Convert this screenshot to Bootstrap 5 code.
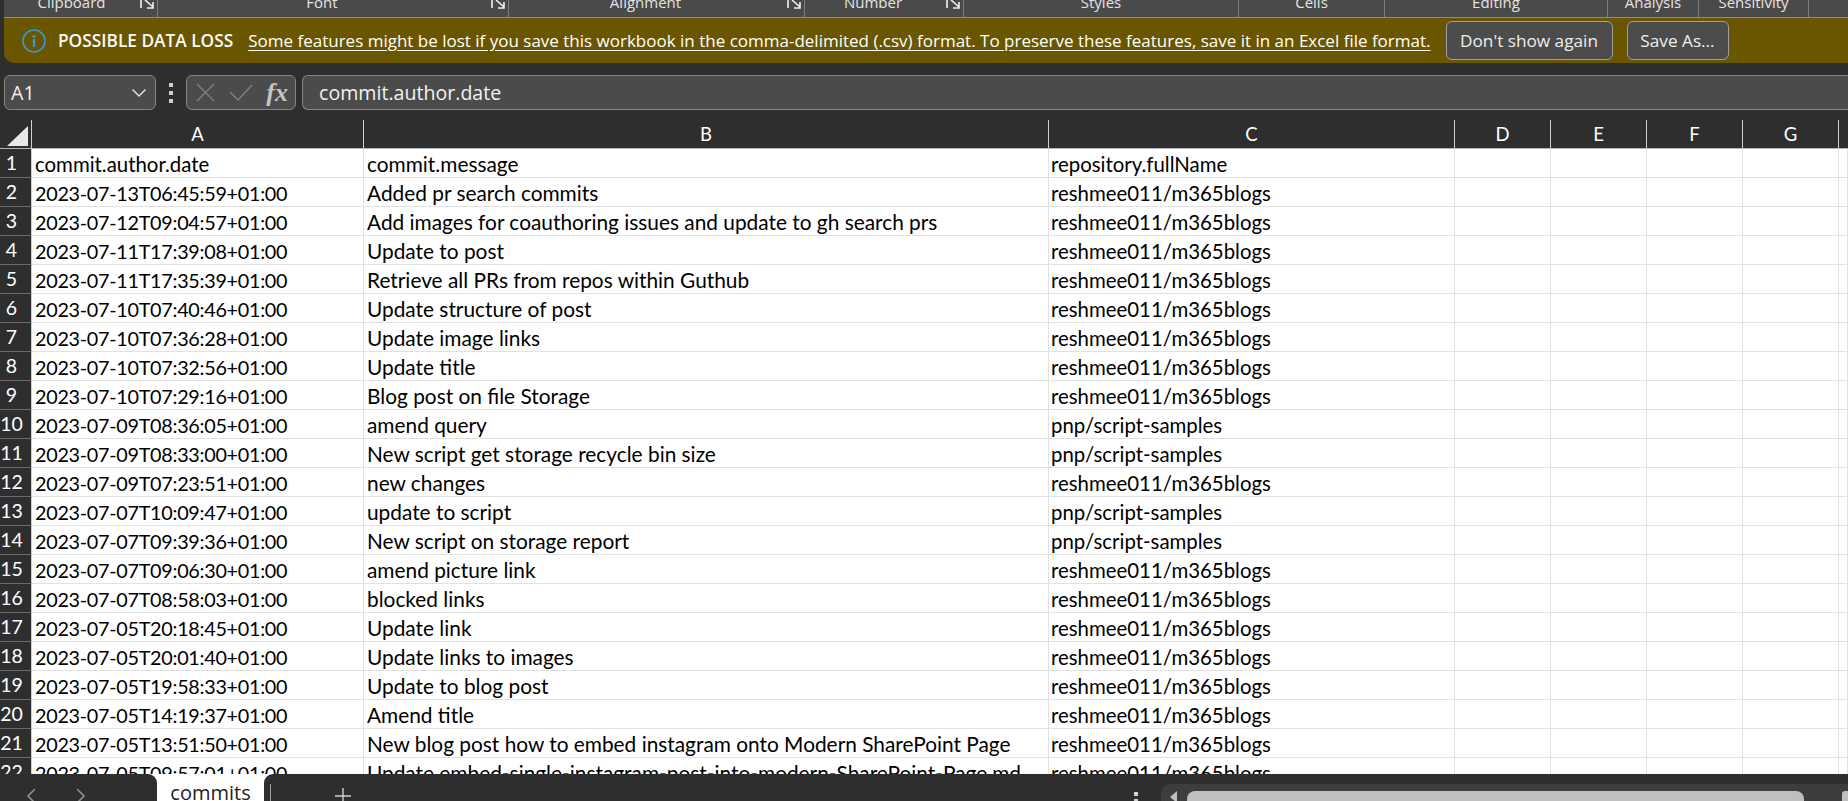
<!DOCTYPE html>
<html lang="en"><head><meta charset="utf-8"><title>commits</title>
<link rel="stylesheet" href="https://cdn.jsdelivr.net/npm/bootstrap@5.3.0/dist/css/bootstrap.min.css">
<style>
html,body{height:100%;}
body{background:#2e2e2e;font-family:"Open Sans","Noto Sans",sans-serif;color:#fff;overflow:hidden;}
.shell{height:801px;}
.ribbon{height:18px;margin-left:4px;background:#4a4a4a;border-bottom:1px solid #8c8c8c;overflow:hidden;display:grid;grid-template-columns:154px 351px 296px 159px 275px 146px 223px 91px 110px 1fr;}
.rgroup{height:17px;border-right:1px solid #7d7d7d;display:flex;color:#e4e4e4;font-size:15px;line-height:17px;}
.rgroup:first-child span{padding-left:4px;}
.rgroup:last-child{border-right:0;}
.rgroup span{flex:1;text-align:center;margin-top:-6px;white-space:nowrap;}
.rgroup svg{flex:none;width:22px;height:17px;}
.banner{height:45px;margin-left:4px;background:#6b5600;border-bottom-left-radius:10px;padding-left:18px;font-size:17px;white-space:nowrap;}
.banner b{font-weight:600;font-size:17.3px;margin-left:12px;margin-right:15px;color:#fafafa;}
.banner a{color:#fff;text-decoration:underline;text-underline-offset:3px;}
.bbtn{height:39px;padding:0;background:#4c4c4c;border:1px solid #a0a0a0;border-radius:6px;color:#eee;font-size:17.2px;line-height:36px;white-space:nowrap;}
.bbtn:hover{background:#4c4c4c;color:#eee;border-color:#a0a0a0;}
.bfirst{margin-left:15px;width:167px;}
.bsecond{margin-left:14px;width:102px;}
.fbar{height:35px;margin-top:12px;padding-left:4px;}
.fieldbox{height:35px;background:#4b4b4b;border:1px solid #868686;border-radius:6px;color:#f2f2f2;font-size:19.6px;}
.namebox{width:152px;padding:0 8px 0 6px;}
.dots{width:30px;}
.dots i{display:block;width:4px;height:4px;margin:2px auto;background:#d0d0d0;}
.fxbox{width:110px;padding:0 7px 0 9px;}
.fxlabel{font-family:"Liberation Serif",serif;font-style:italic;font-weight:700;font-size:26px;color:#c4c4c4;line-height:30px;}
.formula{flex:1;margin-left:6px;padding-left:16px;border-right:0;border-radius:6px 0 0 6px;margin-right:-4px;}
.sheet{flex:1 1 0;min-height:0;margin-top:10px;overflow:hidden;}
.grid-t{table-layout:fixed;width:1848px;border-collapse:separate;border-spacing:0;font-family:Lato,"Liberation Sans",sans-serif;font-size:20.4px;color:#000;}
.grid-t th,.grid-t td{padding:0;white-space:nowrap;overflow:hidden;}
.grid-t thead th{height:29px;background:#2e2e2e;color:#fff;font-weight:400;text-align:center;border-right:1px solid #cfcfcf;border-bottom:1px solid #b4b4b4;line-height:28px;font-size:18.5px;}
.grid-t thead th:last-child{border-right:0;}
.grid-t tbody th{height:29px;background:#2e2e2e;color:#fff;font-weight:400;text-align:center;border-bottom:1px solid #6a6a6a;border-right:1px solid #cfcfcf;line-height:28px;font-size:19.5px;padding-right:8px;}
.grid-t tbody td{height:29px;background:#fff;border-right:1px solid #e1e1e1;border-bottom:1px solid #e1e1e1;padding:2px 0 0 3px;line-height:26px;}
.grid-t td.stamp{font-size:19.8px;letter-spacing:-.28px;}
.grid-t td.msg{font-size:20.85px;}
.grid-t td.repo{padding-left:2px;}
.corner{display:block;margin:4px 0 0 7px;}
.tabbar{height:27px;background:#fff;overflow:hidden;}
.tabnav{width:157px;background:#2e2e2e;border-top-right-radius:9px;padding-left:26px;gap:40px;}
.tabnav svg{margin-top:14px;}
.tabnow{width:107px;color:#222;font-family:"Open Sans",sans-serif;font-weight:500;font-size:20px;text-align:center;line-height:38px;}
.tabrest{flex:1;background:#2e2e2e;border-top-left-radius:9px;}
.tabsep{width:1px;height:17px;margin:10px 0 0 6px;background:#9a9a9a;}
.tabplus{margin:14px 777px 0 64px;}
.sdots{margin:18px 0 0 6px;width:4px;}
.sdots i{display:block;width:4px;height:4px;background:#d0d0d0;margin-bottom:3px;}
.track{height:17px;margin:10px 0 0 23px;flex:1;background:#3d3d3d;border-top-left-radius:9px;padding:7px 0 0 8px;}
.thumb{width:617px;height:20px;background:#bfbfbf;border-radius:8px;margin-left:10px;}
.thumb2{width:6px;height:20px;background:#bfbfbf;border-radius:3px 0 0 0;margin-left:38px;}
</style></head>
<body>
<div class="shell d-flex flex-column">
  <div class="ribbon">
    <div class="rgroup"><span>Clipboard</span><svg viewBox="0 0 22 17"><path d="M6 0v8M10 0l8 7M18 2v6h-6" fill="none" stroke="#f0f0f0" stroke-width="1.6"/></svg></div>
    <div class="rgroup"><span>Font</span><svg viewBox="0 0 22 17"><path d="M6 0v8M10 0l8 7M18 2v6h-6" fill="none" stroke="#f0f0f0" stroke-width="1.6"/></svg></div>
    <div class="rgroup"><span>Alignment</span><svg viewBox="0 0 22 17"><path d="M6 0v8M10 0l8 7M18 2v6h-6" fill="none" stroke="#f0f0f0" stroke-width="1.6"/></svg></div>
    <div class="rgroup"><span>Number</span><svg viewBox="0 0 22 17"><path d="M6 0v8M10 0l8 7M18 2v6h-6" fill="none" stroke="#f0f0f0" stroke-width="1.6"/></svg></div>
    <div class="rgroup"><span>Styles</span></div>
    <div class="rgroup"><span>Cells</span></div>
    <div class="rgroup"><span>Editing</span></div>
    <div class="rgroup"><span>Analysis</span></div>
    <div class="rgroup"><span>Sensitivity</span></div>
    <div class="rgroup"></div>
  </div>
  <div class="banner d-flex align-items-center">
    <svg width="24" height="24" viewBox="0 0 24 24" class="flex-shrink-0"><circle cx="12" cy="12" r="11" fill="none" stroke="#3e97cf" stroke-width="1.6"/><circle cx="12" cy="7.2" r="1.5" fill="#3e97cf"/><rect x="10.8" y="10" width="2.4" height="8" fill="#3e97cf"/></svg>
    <b>POSSIBLE DATA LOSS</b>
    <a href="#">Some features might be lost if you save this workbook in the comma-delimited (.csv) format. To preserve these features, save it in an Excel file format.</a>
    <button type="button" class="btn bbtn bfirst">Don't show again</button>
    <button type="button" class="btn bbtn bsecond">Save As...</button>
  </div>
  <div class="fbar d-flex">
    <div class="fieldbox namebox d-flex align-items-center justify-content-between"><span>A1</span><svg width="16" height="10" viewBox="0 0 16 10"><path d="M1.5 1.5L8 8l6.5-6.5" fill="none" stroke="#e0e0e0" stroke-width="1.5"/></svg></div>
    <div class="dots d-flex flex-column justify-content-center"><i></i><i></i><i></i></div>
    <div class="fieldbox fxbox d-flex align-items-center justify-content-between">
      <svg width="19" height="19" viewBox="0 0 19 19"><path d="M1 1l17 17M18 1L1 18" fill="none" stroke="#7f7f7f" stroke-width="1.4"/></svg>
      <svg width="24" height="17" viewBox="0 0 24 17"><path d="M1 8l8 8L23 1" fill="none" stroke="#7f7f7f" stroke-width="1.4"/></svg>
      <span class="fxlabel">fx</span>
    </div>
    <div class="fieldbox formula d-flex align-items-center">commit.author.date</div>
  </div>
  <div class="sheet">
    <table class="grid-t">
      <colgroup><col style="width:32px"><col style="width:332px"><col style="width:685px"><col style="width:406px"><col style="width:96px"><col style="width:96px"><col style="width:96px"><col style="width:96px"><col></colgroup>
      <thead><tr><th><svg class="corner" width="21" height="20" viewBox="0 0 21 20"><path d="M21 0v20H0z" fill="#e8e8e8"/></svg></th><th>A</th><th>B</th><th>C</th><th>D</th><th>E</th><th>F</th><th>G</th><th></th></tr></thead>
      <tbody id="rows"></tbody>
    </table>
  </div>
  <div class="tabbar d-flex">
    <div class="tabnav d-flex align-items-start">
      <svg width="10" height="16" viewBox="0 0 10 16"><path d="M9 1L2 8l7 7" fill="none" stroke="#8f8f8f" stroke-width="1.6"/></svg>
      <svg width="10" height="16" viewBox="0 0 10 16"><path d="M1 1l7 7-7 7" fill="none" stroke="#8f8f8f" stroke-width="1.6"/></svg>
    </div>
    <div class="tabnow">commits</div>
    <div class="tabrest d-flex align-items-start">
      <div class="tabsep"></div>
      <svg class="tabplus" width="16" height="16" viewBox="0 0 16 16"><path d="M8 0v16M0 8h16" stroke="#cfcfcf" stroke-width="1.4"/></svg>
      <div class="sdots"><i></i><i></i></div>
      <div class="track d-flex align-items-start">
        <svg width="8" height="12" viewBox="0 0 8 12"><path d="M8 0v12L1 6z" fill="#bfbfbf"/></svg>
        <div class="thumb"></div>
        <div class="thumb2"></div>
      </div>
    </div>
  </div>
</div>
<script>
var R='reshmee011/m365blogs',P='pnp/script-samples';
var d=[['commit.author.date','commit.message','repository.fullName'],
['2023-07-13T06:45:59+01:00','Added pr search commits',R],
['2023-07-12T09:04:57+01:00','Add images for coauthoring issues and update to gh search prs',R],
['2023-07-11T17:39:08+01:00','Update to post',R],
['2023-07-11T17:35:39+01:00','Retrieve all PRs from repos within Guthub',R],
['2023-07-10T07:40:46+01:00','Update structure of post',R],
['2023-07-10T07:36:28+01:00','Update image links',R],
['2023-07-10T07:32:56+01:00','Update title',R],
['2023-07-10T07:29:16+01:00','Blog post on file Storage',R],
['2023-07-09T08:36:05+01:00','amend query',P],
['2023-07-09T08:33:00+01:00','New script get storage recycle bin size',P],
['2023-07-09T07:23:51+01:00','new changes',R],
['2023-07-07T10:09:47+01:00','update to script',P],
['2023-07-07T09:39:36+01:00','New script on storage report',P],
['2023-07-07T09:06:30+01:00','amend picture link',R],
['2023-07-07T08:58:03+01:00','blocked links',R],
['2023-07-05T20:18:45+01:00','Update link',R],
['2023-07-05T20:01:40+01:00','Update links to images',R],
['2023-07-05T19:58:33+01:00','Update to blog post',R],
['2023-07-05T14:19:37+01:00','Amend title',R],
['2023-07-05T13:51:50+01:00','New blog post how to embed instagram onto Modern SharePoint Page',R],
['2023-07-05T09:57:01+01:00','Update embed-single-instagram-post-into-modern-SharePoint-Page.md',R]];
var h='';
d.forEach(function(r,i){h+='<tr><th>'+(i+1)+'</th><td'+(i?' class="stamp"':'')+'>'+r[0]+'</td><td class="msg">'+r[1]+'</td><td class="repo">'+r[2]+'</td><td></td><td></td><td></td><td></td><td></td></tr>';});
document.getElementById('rows').innerHTML=h;
</script>
</body></html>
